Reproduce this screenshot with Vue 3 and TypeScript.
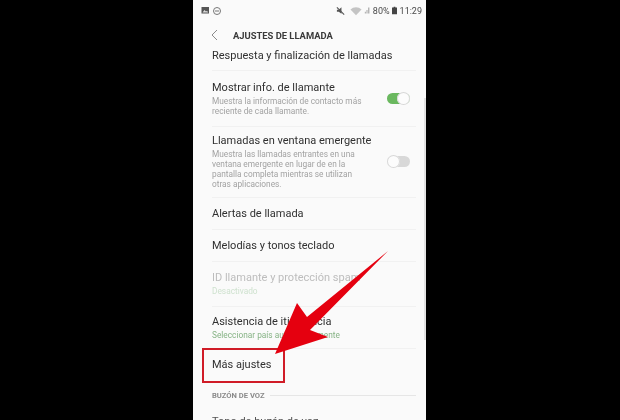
<script setup lang="ts">
interface Row {
  title: string
  lines?: string[]
  sub?: string
  sw?: 'on' | 'off'
  cls: string
}
const rows: Row[] = [
  { title: 'Respuesta y finalización de llamadas', cls: 'r0' },
  { title: 'Mostrar info. de llamante', lines: ['Muestra la información de contacto más', 'reciente de cada llamante.'], sw: 'on', cls: 'r1' },
  { title: 'Llamadas en ventana emergente', lines: ['Muestra las llamadas entrantes en una', 'ventana emergente en lugar de en la', 'pantalla completa mientras se utilizan', 'otras aplicaciones.'], sw: 'off', cls: 'r2' },
  { title: 'Alertas de llamada', cls: 'r3' },
  { title: 'Melodías y tonos teclado', cls: 'r3' },
  { title: 'ID llamante y protección spam', sub: 'Desactivado', cls: 'r4 dim' },
  { title: 'Asistencia de itinerancia', sub: 'Seleccionar país automáticamente', cls: 'r5' },
]
</script>

<template>
  <div class="stage">
    <div class="phone">
      <div class="status">
        <svg class="ic" width="22" height="10" viewBox="0 0 22 10">
          <rect x="0.5" y="1" width="7.5" height="6.5" fill="#555" />
          <path d="M1.5 6.5l2-2.4 1.500 1.400 1-.8 1.200 1.800z" fill="#ddd" />
          <circle cx="16" cy="5" r="3.500" fill="none" stroke="#777" stroke-width="1" />
          <path d="M14 5h4" stroke="#777" stroke-width="1" />
        </svg>
        <span class="grow"></span>
        <svg width="10" height="10" viewBox="0 0 11 10">
          <path d="M1 3.500h2L6 1v7L3 5.800H1z" fill="#555" />
          <path d="M1 1l8 8" stroke="#555" stroke-width="1.200" />
        </svg>
        <svg class="wifi" width="12" height="10" viewBox="0 0 13 10">
          <path d="M0.500 3.500a8.500 8.500 0 0 1 12 0L6.500 9.500z" fill="#c4c4c4" />
        </svg>
        <svg width="6" height="9" viewBox="0 0 7 9">
          <path d="M1 6h1v2H1zM3 4h1v4H3zM5 1h1.200v7H5z" fill="#999" />
        </svg>
        <span class="pct">80%</span>
        <svg width="5" height="9" viewBox="0 0 6 9">
          <path d="M2 0h2v1h2v8H0V1h2z" fill="#444" />
        </svg>
        <span class="time">11:29</span>
      </div>
      <div class="head">
        <svg class="back" width="7" height="12" viewBox="0 0 7 12">
          <path d="M6 1L1 6l5 5" fill="none" stroke="#8a8a8a" stroke-width="1" />
        </svg>
        <span class="head-title">AJUSTES DE LLAMADA</span>
      </div>
      <div class="list">
        <div v-for="row in rows" :key="row.title" class="row" :class="row.cls">
          <div class="texts">
            <div class="title">{{ row.title }}</div>
            <div v-for="l in row.lines" :key="l" class="desc">{{ l }}</div>
            <div v-if="row.sub" class="sub">{{ row.sub }}</div>
          </div>
          <span v-if="row.sw" class="switch" :class="row.sw"><i class="knob"></i></span>
        </div>
        <div class="row r6">
          <div class="title">Más ajustes</div>
        </div>
        <div class="section"><span>BUZÓN DE VOZ</span><i class="rule"></i></div>
        <div class="title clipped">Tono de buzón de voz</div>
      </div>
      <i class="thumb"></i>
    </div>
    <div class="redbox"></div>
    <svg class="arrow" width="620" height="420" viewBox="0 0 620 420">
      <path d="M388 251L310 330L328 337L275 354L297 303L307 317Z" fill="#e5000f" />
    </svg>
  </div>
</template>

<style scoped>
.stage {
  position: relative;
  width: 620px;
  height: 420px;
  background: #000;
  overflow: hidden;
  display: flex;
  justify-content: center;
  font-family: Roboto, "Liberation Sans", sans-serif;
}
.phone {
  position: relative;
  width: 233px;
  margin-left: -1px;
  height: 420px;
  background: #fafafa;
  overflow: hidden;
  filter: blur(0.5px);
}
.thumb {
  position: absolute;
  right: 0;
  top: 98px;
  width: 2px;
  height: 242px;
  background: #e2e2e2;
}
.status {
  height: 21px;
  display: flex;
  align-items: center;
  padding: 0 4px 0 8px;
  gap: 2px;
  font-size: 9px;
  color: #4a4a4a;
}
.grow { flex: 1; }
.wifi { margin-left: 2px; }
.pct { margin-left: 1px; }
.time { margin-left: 1px; }
.head {
  height: 28px;
  display: flex;
  align-items: center;
  padding-left: 18px;
}
.head-title {
  margin-left: 15px;
  font-size: 9.400px;
  font-weight: 700;
  color: #3a3a3a;
}
.back { flex: none; }
.list { padding: 0 10px 0 19px; }
.row {
  display: flex;
  align-items: center;
  justify-content: space-between;
  border-bottom: 1px solid #f1f1f1;
  box-sizing: border-box;
}
.r0 { height: 22px; align-items: flex-start; }
.r1 { height: 56px; }
.r2 { height: 71px; padding-bottom: 2px; }
.r3 { height: 32px; }
.r4 { height: 45px; }
.r5 { height: 42px; }
.r6 { height: 32px; border-bottom: 0; }
.title {
  font-size: 11px;
  line-height: 14px;
  color: #303030;
  white-space: nowrap;
}
.desc {
  font-size: 8.300px;
  line-height: 10px;
  color: #a2a2a2;
  white-space: nowrap;
}
.title + .desc { margin-top: 1px; }
.sub {
  font-size: 8.300px;
  line-height: 12px;
  color: #86b385;
  white-space: nowrap;
}
.dim .title { color: #bdbdbd; }
.dim .sub { color: #cfe2cf; }
.switch {
  flex: none;
  width: 23px;
  height: 11px;
  margin-right: 6px;
  border-radius: 6px;
  display: flex;
  align-items: center;
}
.switch.on { background: #6ab85f; justify-content: flex-end; }
.switch.off { background: #d8d8d8; justify-content: flex-start; }
.knob {
  flex: none;
  width: 13px;
  height: 13px;
  border-radius: 50%;
  background: #fcfcfc;
  box-shadow: 0 0 0 1px #d8d8d8 inset;
}
.section {
  display: flex;
  align-items: center;
  gap: 5px;
  height: 16px;
  margin-top: 6px;
  font-size: 7.600px;
  font-weight: 700;
  color: #8a8a8a;
  white-space: nowrap;
}
.rule { flex: 1; height: 1px; background: #e6e6e6; }
.clipped { margin-top: 12px; color: #555; }
.redbox {
  position: absolute;
  left: 202px;
  top: 348px;
  width: 83px;
  height: 35px;
  box-sizing: border-box;
  border: 2px solid #d01c27;
}
.arrow {
  position: absolute;
  left: 0;
  top: 0;
}
</style>
